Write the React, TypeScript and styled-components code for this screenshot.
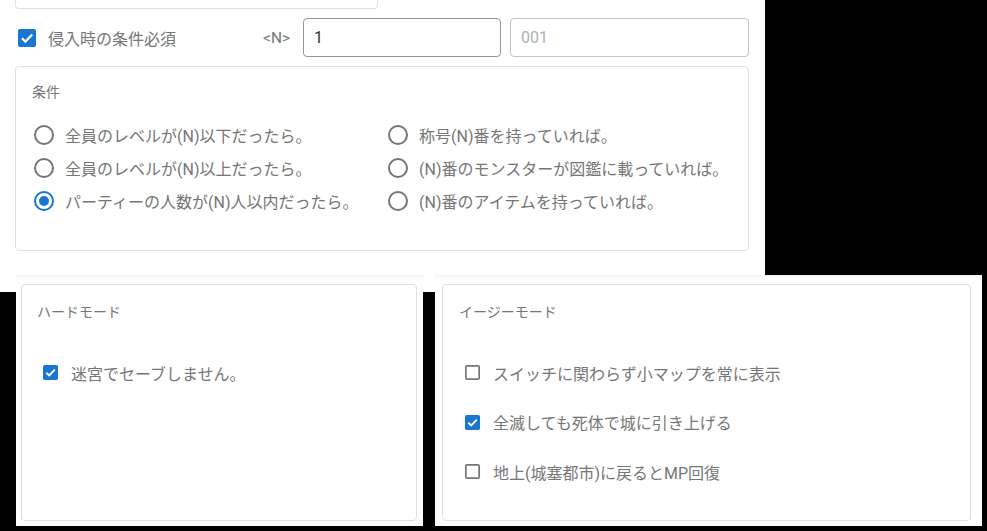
import styled, { createGlobalStyle } from 'styled-components';

const BLUE = '#1976d2';
const TEXT = '#767676';

const GlobalStyle = createGlobalStyle`
  html, body {
    margin: 0;
    padding: 0;
    background: #000;
  }

  body {
    font-family: Roboto, "Noto Sans CJK JP", sans-serif;
  }
`;

const SPage = styled.div`
  width: 987px;
  height: 531px;
  overflow: hidden;
  background: #000;
`;

const STop = styled.section`
  width: 765px;
  height: 275px;
  background: #fff;
  overflow: hidden;
`;

const SPrevField = styled.div`
  box-sizing: border-box;
  width: 363px;
  height: 9px;
  margin-left: 15px;
  border: 1px solid #e0e0e0;
  border-top: none;
  border-radius: 0 0 4px 4px;
`;

const SHeaderRow = styled.div`
  display: flex;
  align-items: center;
  height: 39px;
  margin-top: 9px;
  padding-left: 18px;
`;

const SCheckLabel = styled.label<{ $gap: number; $size: number }>`
  display: flex;
  align-items: center;
  gap: ${({ $gap }) => $gap}px;

  font-size: ${({ $size }) => $size}px;
  color: ${TEXT};
`;

const SRequiredLabel = styled(SCheckLabel)`
  width: 245px;
`;

const SNTag = styled.span`
  width: 40px;
  font-size: 15.5px;
  color: ${TEXT};
`;

const SInput = styled.input<{ $width: number; $strong?: boolean }>`
  box-sizing: border-box;
  width: ${({ $width }) => $width}px;
  height: 39px;
  padding: 0 11px 0 10px;
  border: 1px solid ${({ $strong }) => ($strong ? '#959595' : '#c4c4c4')};
  border-radius: 4px;
  outline: none;

  font-family: inherit;
  font-size: 16px;
  color: #333;

  & + & {
    margin-left: 9px;
  }

  &::placeholder {
    color: #b0b0b0;
  }
`;

const SConditionCard = styled.div`
  box-sizing: border-box;
  width: 734px;
  height: 185px;
  margin: 9px 0 0 15px;
  padding: 15px 16px;
  border: 1px solid #e0e0e0;
  border-radius: 4px;
`;

const SCardTitle = styled.div`
  font-size: 14px;
  line-height: 20px;
  color: ${TEXT};
`;

const SRadioGrid = styled.div`
  display: grid;
  grid-template-columns: 354px 1fr;
  grid-template-rows: repeat(3, 33px);
  grid-auto-flow: column;
  margin-top: 16px;
  padding-left: 2px;
`;

const SRadioItem = styled.label`
  display: flex;
  align-items: center;
  gap: 11px;

  font-size: 16px;
  color: ${TEXT};
  white-space: nowrap;
`;

const SBottom = styled.div`
  display: flex;
  height: 256px;
  background: linear-gradient(#fff, #fff) no-repeat 0 0 / 765px 17px, #000;
`;

const SPanel = styled.section<{ $width: number; $offset: number; $pad: string }>`
  box-sizing: border-box;
  display: flex;
  width: ${({ $width }) => $width}px;
  height: 251px;
  margin-left: ${({ $offset }) => $offset}px;
  padding: ${({ $pad }) => $pad};
  background: #fff;
  box-shadow: inset 0 5px 5px -4px rgba(0, 0, 0, 0.07);
`;

const SModeCard = styled.div<{ $padLeft: number }>`
  box-sizing: border-box;
  flex: 1;
  padding: 17px 15px 0 ${({ $padLeft }) => $padLeft}px;
  border: 1px solid #e0e0e0;
  border-radius: 4px;
`;

const SOptionList = styled.ul`
  display: flex;
  flex-direction: column;
  margin: 26px 0 0;
  padding: 0 0 0 6px;
  list-style: none;
`;

const SOption = styled.li`
  display: flex;
  align-items: center;
  height: 49.5px;
`;

const RadioIcon = ({ checked }: { checked?: boolean }) => (
  <svg width="20" height="20" viewBox="0 0 20 20">
    <circle
      cx="10"
      cy="10"
      r="9"
      fill="none"
      stroke={checked ? BLUE : '#757575'}
      strokeWidth="2"
    />
    {checked && <circle cx="10" cy="10" r="5" fill={BLUE} />}
  </svg>
);

const CheckIcon = ({ checked, size }: { checked?: boolean; size: number }) => (
  <svg width={size} height={size} viewBox="0 0 18 18">
    {checked ? (
      <>
        <rect x="0" y="0" width="18" height="18" rx="2" fill={BLUE} />
        <path
          d="M4 9.3 L7.4 12.6 L14.2 5.6"
          fill="none"
          stroke="#fff"
          strokeWidth="2.2"
        />
      </>
    ) : (
      <rect
        x="1"
        y="1"
        width="16"
        height="16"
        rx="1.5"
        fill="none"
        stroke="#757575"
        strokeWidth="2"
      />
    )}
  </svg>
);

const conditions = [
  { label: '全員のレベルが(N)以下だったら。' },
  { label: '全員のレベルが(N)以上だったら。' },
  { label: 'パーティーの人数が(N)人以内だったら。', checked: true },
  { label: '称号(N)番を持っていれば。' },
  { label: '(N)番のモンスターが図鑑に載っていれば。' },
  { label: '(N)番のアイテムを持っていれば。' },
];

const easyOptions = [
  { label: 'スイッチに関わらず小マップを常に表示' },
  { label: '全滅しても死体で城に引き上げる', checked: true },
  { label: '地上(城塞都市)に戻るとMP回復' },
];

const App = () => {
  return (
    <SPage>
      <GlobalStyle />
      <STop>
        <SPrevField />
        <SHeaderRow>
          <SRequiredLabel $gap={12} $size={16}>
            <CheckIcon checked size={18} />
            <span>侵入時の条件必須</span>
          </SRequiredLabel>
          <SNTag>&lt;N&gt;</SNTag>
          <SInput $width={198} $strong defaultValue="1" />
          <SInput $width={239} placeholder="001" />
        </SHeaderRow>
        <SConditionCard>
          <SCardTitle>条件</SCardTitle>
          <SRadioGrid>
            {conditions.map((item) => (
              <SRadioItem key={item.label}>
                <RadioIcon checked={item.checked} />
                <span>{item.label}</span>
              </SRadioItem>
            ))}
          </SRadioGrid>
        </SConditionCard>
      </STop>
      <SBottom>
        <SPanel $width={407} $offset={16} $pad="9px 6px 5px 5px">
          <SModeCard $padLeft={15}>
            <SCardTitle>ハードモード</SCardTitle>
            <SOptionList>
              <SOption>
                <SCheckLabel $gap={13} $size={16}>
                  <CheckIcon checked size={15} />
                  <span>迷宮でセーブしません。</span>
                </SCheckLabel>
              </SOption>
            </SOptionList>
          </SModeCard>
        </SPanel>
        <SPanel $width={547} $offset={12} $pad="9px 11px 5px 7px">
          <SModeCard $padLeft={16}>
            <SCardTitle>イージーモード</SCardTitle>
            <SOptionList>
              {easyOptions.map((item) => (
                <SOption key={item.label}>
                  <SCheckLabel $gap={13} $size={16}>
                    <CheckIcon checked={item.checked} size={15} />
                    <span>{item.label}</span>
                  </SCheckLabel>
                </SOption>
              ))}
            </SOptionList>
          </SModeCard>
        </SPanel>
      </SBottom>
    </SPage>
  );
};

export default App;
